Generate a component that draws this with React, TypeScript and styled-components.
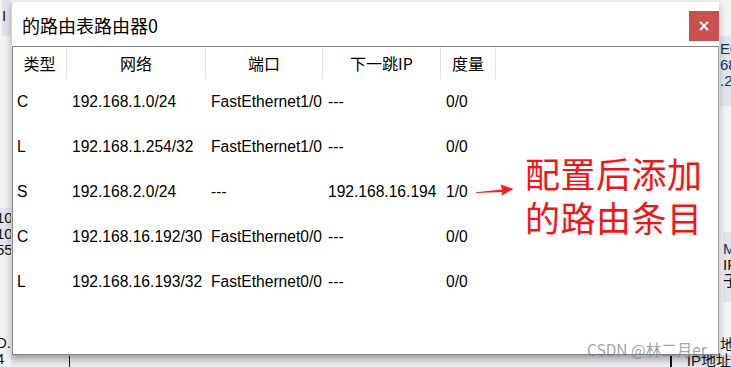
import styled, { createGlobalStyle } from "styled-components";

const GlobalStyle = createGlobalStyle`
  body {
    margin: 0;
    font-family: "Liberation Sans", Arial, "Noto Sans CJK SC", sans-serif;
    background: #eeeef2;
  }
`;

// desktop: left strip | dialog | right strip, with a strip of the app below
const Desktop = styled.div`
  position: relative;
  width: 731px;
  height: 367px;
  overflow: hidden;
  display: grid;
  grid-template-columns: 11px 708px 12px;
  grid-template-rows: 2px 353px 12px;
  background: #f3f3f6;
`;

const SideStrip = styled.div<{ $rows: string; $side: "left" | "right" }>`
  grid-row: 1 / 4;
  grid-column: ${(p) => (p.$side === "left" ? 1 : 3)};
  display: grid;
  grid-template-rows: ${(p) => p.$rows};
  overflow: hidden;
`;

const Band = styled.div<{ $shade?: boolean; $pad?: number; $shift?: number }>`
  background: ${(p) => (p.$shade ? "#e3e3e9" : "transparent")};
  padding-top: ${(p) => p.$pad ?? 0}px;
  margin-left: ${(p) => p.$shift ?? 0}px;
  display: flex;
  flex-direction: column;
  font-size: 15px;
  line-height: 16px;
  color: #111;
  white-space: nowrap;
`;

const BlueText = styled.span`
  color: #1a2f6e;
`;

const BottomStrip = styled.div`
  grid-row: 3;
  grid-column: 2 / 4;
  display: flex;
  align-items: flex-end;
  padding-left: 58px;
  background: linear-gradient(180deg, #d4d4d8, #ececf0);
  font-size: 15px;
  line-height: 12px;
  color: #111;
  white-space: nowrap;
`;

const Wire = styled.div<{ $gap: number }>`
  width: 2px;
  height: 11px;
  margin-right: ${(p) => p.$gap}px;
  background: #111;
`;

const Window = styled.div`
  position: relative;
  z-index: 1;
  grid-row: 2;
  grid-column: 2;
  box-sizing: border-box;
  background: #fff;
  border-left: 1px solid #d4d4d8;
  display: flex;
  flex-direction: column;
  box-shadow: 0 3px 7px rgba(0, 0, 0, 0.28);
`;

const TitleBar = styled.div`
  height: 44px;
  flex: none;
  display: flex;
  justify-content: space-between;
  align-items: flex-start;
  padding-left: 10px;
`;

const Title = styled.div`
  font-family: "Noto Sans CJK SC", sans-serif;
  font-size: 18px;
  line-height: 18px;
  margin-top: 14px;
  color: #000;
`;

const CloseButton = styled.div`
  width: 30px;
  height: 30px;
  margin-top: 9px;
  background: #c9504f;
  color: #fff;
  display: flex;
  align-items: center;
  justify-content: center;
  font-family: "DejaVu Sans", sans-serif;
  font-weight: bold;
  font-size: 15px;
`;

const Panel = styled.div`
  flex: 1;
  border: 1px solid #84868a;
  border-right-color: #a4a6aa;
  background: #fff;
`;

const COLS = "54px 139px 117px 118px 55px";

const HeaderRow = styled.div`
  display: grid;
  grid-template-columns: ${COLS};
  height: 32px;
`;

const HeadCell = styled.div`
  border-right: 1px solid #e4e4e4;
  display: flex;
  align-items: center;
  justify-content: center;
  font-family: "Noto Sans CJK SC", sans-serif;
  font-size: 16px;
  color: #000;
  padding-bottom: 1px;
`;

const Row = styled.div`
  display: grid;
  grid-template-columns: ${COLS};
  height: 45px;
  align-items: center;
`;

const Cell = styled.div`
  padding-left: 4px;
  padding-top: 1px;
  font-size: 15.6px;
  color: #000;
  white-space: nowrap;
  & + & {
    padding-left: 5px;
  }
`;

const Note = styled.div`
  position: absolute;
  left: 513px;
  top: 149px;
  font-family: "Noto Sans CJK SC", sans-serif;
  font-size: 35px;
  line-height: 44px;
  color: #ff1010;
  letter-spacing: 0.5px;
`;

const Arrow = styled.svg`
  position: absolute;
  left: 463px;
  top: 178px;
`;

const Watermark = styled.div`
  position: absolute;
  z-index: 2;
  left: 587px;
  top: 340px;
  font-family: "Noto Sans CJK SC", sans-serif;
  font-size: 15.5px;
  line-height: 18px;
  color: rgba(120, 120, 126, 0.7);
  white-space: nowrap;
`;

const headers = ["类型", "网络", "端口", "下一跳IP", "度量"];

const routes = [
  ["C", "192.168.1.0/24", "FastEthernet1/0", "---", "0/0"],
  ["L", "192.168.1.254/32", "FastEthernet1/0", "---", "0/0"],
  ["S", "192.168.2.0/24", "---", "192.168.16.194", "1/0"],
  ["C", "192.168.16.192/30", "FastEthernet0/0", "---", "0/0"],
  ["L", "192.168.16.193/32", "FastEthernet0/0", "---", "0/0"],
];

function App() {
  return (
    <>
      <GlobalStyle />
      <Desktop>
        <SideStrip $side="left" $rows="36px 172px 44px 82px 1fr">
          <Band $shade $pad={8} $shift={2}>I</Band>
          <Band />
          <Band $shade $pad={2} $shift={-4}>
            <span>10</span>
            <span>10</span>
            <span>55</span>
          </Band>
          <Band />
          <Band $pad={1} $shift={-4}>
            <span>D.</span>
            <span>4</span>
          </Band>
        </SideStrip>

        <SideStrip $side="right" $rows="36px 70px 126px 70px 35px 1fr">
          <Band />
          <Band $shade $pad={5} $shift={1}>
            <BlueText>E0</BlueText>
            <BlueText>68</BlueText>
            <BlueText>.2</BlueText>
          </Band>
          <Band />
          <Band $shade $pad={9} $shift={4}>
            <BlueText>M</BlueText>
            <span>IP</span>
            <span>子</span>
          </Band>
          <Band />
          <Band $shift={1}>地</Band>
        </SideStrip>

        <BottomStrip>
          <Wire $gap={600} />
          <Wire $gap={15} />
          IP地址
        </BottomStrip>

        <Window>
          <TitleBar>
            <Title>的路由表路由器0</Title>
            <CloseButton>×</CloseButton>
          </TitleBar>
          <Panel>
            <HeaderRow>
              {headers.map((h) => (
                <HeadCell key={h}>{h}</HeadCell>
              ))}
            </HeaderRow>
            {routes.map((r, i) => (
              <Row key={i}>
                {r.map((c, j) => (
                  <Cell key={j}>{c}</Cell>
                ))}
              </Row>
            ))}
          </Panel>

          <Arrow width="42" height="18" viewBox="0 0 42 18">
            <polygon points="1,12.2 27,9.6 25.5,4.5 38.5,9 26.5,15.5 27.2,12 1,13" fill="#ff1a1a" />
          </Arrow>
          <Note>
            配置后添加
            <br />
            的路由条目
          </Note>
        </Window>

        <Watermark>CSDN @林二月er</Watermark>
      </Desktop>
    </>
  );
}

export default App;
